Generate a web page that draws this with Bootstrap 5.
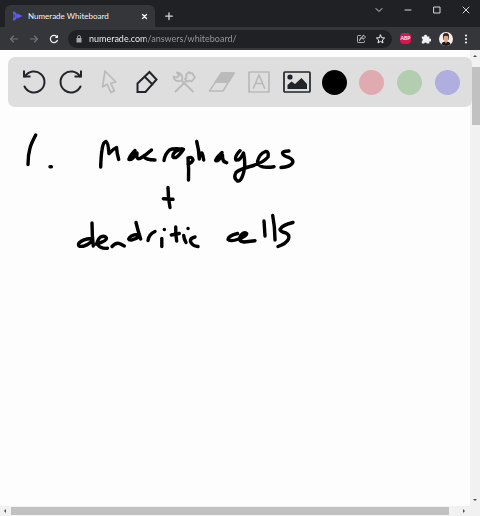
<!DOCTYPE html>
<html lang="en">
<head>
<meta charset="utf-8">
<meta name="viewport" content="width=device-width, initial-scale=1">
<title>Numerade Whiteboard</title>
<link href="https://cdn.jsdelivr.net/npm/bootstrap@5.3.0/dist/css/bootstrap.min.css" rel="stylesheet">
<style>
body{font-family:Lato,"Open Sans",sans-serif;font-size:8px;line-height:12px;background:#fdfdfd;overflow:hidden}
button{border:0;padding:0;background:none;color:inherit;display:flex;align-items:center;justify-content:center;flex-shrink:0}
svg{display:block;flex-shrink:0}
.ln{fill:none;stroke:currentColor;stroke-linecap:round;stroke-linejoin:round}
.tabstrip{background:#202124;height:27px;padding:5px 0 0 5px;color:#d5d7da}
.tab{background:#35363a;border-radius:6px 6px 0 0;width:150px;height:22px;padding:0 6px 0 7px;color:#f1f3f4}
.tabname{margin-left:5px}
.winbtn{width:29px;height:10px}
.addressbar{background:#35363a;height:23px;padding:0 4px;color:#f1f3f4}
.navbtn{width:20px;height:20px}
.urlbox{background:#202124;border-radius:9px;height:18px;margin-left:4px;padding:0 6px 0 8px}
.url{border:0;outline:0;padding:0;min-width:0;height:14px;margin-left:7px;font-size:9px;line-height:14px;color:transparent;background:linear-gradient(90deg,#fff 57px,#9a9da2 57px);-webkit-background-clip:text;background-clip:text}
.abp{width:11px;height:11px;border-radius:4px;background:#e0114e;color:#fff;font-size:5px;line-height:11px;font-weight:700;margin-right:5px}
.extras{margin-left:8px}
.toolpanel{background:#dedede;border-radius:7px;height:50px;margin:7px -2px 0 8px;padding:0 6px 0 7px;color:#212529}
.tool{flex:1 1 0;height:32px}
.tool:disabled{color:#b9bbbb}
.swatch{width:25px;height:25px;border-radius:50%}
.black{background:#000}.pink{background:#e0abb0}.green{background:#b2cdb0}.violet{background:#b0addf}
.ink{color:#000}
.vbar{width:10px;color:#505050}
.hbar{height:10px;background:#f1f1f1;color:#505050}
.board{background:linear-gradient(270deg,#f1f1f1 10px,transparent 10px)}
.arrow{width:10px;height:10px}
.vthumb{width:8px;height:58px;margin-top:7px;margin-left:1px;background:#c1c1c1}
.hthumb{height:8px;background:#c1c1c1;flex:0 1 438px;margin-left:1px}
.endarrow{margin-right:11px}
</style>
<script src="https://cdn.jsdelivr.net/npm/bootstrap@5.3.0/dist/js/bootstrap.bundle.min.js"></script>
</head>
<body class="d-flex flex-column vh-100">
<header>
  <div class="tabstrip d-flex">
    <div class="tab d-flex align-items-center">
      <svg width="11" height="12" viewBox="0 0 11 12"><path d="M1 1l9.500 5L1 11z" fill="#5a57f0"/><path d="M0 4l3 2-3 2M4.500 2l.5 2.500M4.500 10l.5-2.500" fill="none" stroke="#35363a" stroke-width=".8"/></svg>
      <span class="tabname flex-fill text-nowrap">Numerade Whiteboard</span>
      <button type="button" aria-label="Close tab"><svg class="ln" width="9" height="9" viewBox="0 0 9 9" stroke-width="1.400"><path d="M2.500 2.500l4 4M6.500 2.500l-4 4"/></svg></button>
    </div>
    <button type="button" class="ms-2 align-self-center" aria-label="New tab"><svg class="ln" width="12" height="10" viewBox="0 0 12 10" stroke-width="1.300"><path d="M6 2v6.500M2.800 5.200h6.500"/></svg></button>
    <div class="d-flex ms-auto">
      <button type="button" class="winbtn" aria-label="Search tabs"><svg class="ln" width="10" height="8" viewBox="0 0 10 8"><path d="M2 2.500l3 3 3-3"/></svg></button>
      <button type="button" class="winbtn" aria-label="Minimize"><svg class="ln" width="8" height="8" viewBox="0 0 8 8"><path d="M1 4h6"/></svg></button>
      <button type="button" class="winbtn" aria-label="Maximize"><svg class="ln" width="8" height="8" viewBox="0 0 8 8"><path d="M1 1h6v6H1z"/></svg></button>
      <button type="button" class="winbtn" aria-label="Close window"><svg class="ln" width="8" height="8" viewBox="0 0 8 8"><path d="M1 1l6 6M7 1L1 7"/></svg></button>
    </div>
  </div>
  <div class="addressbar d-flex align-items-center">
    <button type="button" class="navbtn" aria-label="Back" disabled><svg class="ln text-secondary" width="10" height="10" viewBox="0 0 10 10" stroke-width="1.100"><path d="M8.500 5H1.500M4.500 2l-3 3 3 3"/></svg></button>
    <button type="button" class="navbtn" aria-label="Forward" disabled><svg class="ln text-secondary" width="10" height="10" viewBox="0 0 10 10" stroke-width="1.100"><path d="M1.500 5h7M5.500 2l3 3-3 3"/></svg></button>
    <button type="button" class="navbtn" aria-label="Reload"><svg class="ln" width="10" height="10" viewBox="0 0 10 10" stroke-width="1.300"><path d="M8.300 6.400A3.600 3.600 0 1 1 8 3"/><path d="M9 .8v3.200H5.800z" fill="currentColor" stroke="none"/></svg></button>
    <div class="urlbox d-flex align-items-center flex-fill">
      <svg width="6" height="8" viewBox="0 0 6 8"><path d="M.5 3h5v4.500h-5z" fill="#a5a8ac"/><path d="M1.500 3V2a1.500 1.500 0 0 1 3 0v1" fill="none" stroke="#a5a8ac" stroke-width=".9"/></svg>
      <input class="url flex-fill" type="text" aria-label="Address" value="numerade.com/answers/whiteboard/">
      <button type="button" aria-label="Share"><svg class="ln" width="11" height="10" viewBox="0 0 11 10" stroke-width=".9" opacity=".75"><path d="M4.500 1.500H2.200Q1.500 1.500 1.500 2.200v5.600q0 .7.700.7h5.600q.7 0 .7-.7V7M3.500 6.500Q4 3.800 7 3.800V5.400L9.700 3 7 1v1.500Q4 2.700 3.500 6.500z"/></svg></button>
      <button type="button" class="ms-2" aria-label="Bookmark"><svg class="ln" width="11" height="10" viewBox="0 0 11 10" stroke-width="1"><path d="M5.500 1l1.200 2.700 2.900.3-2.200 2 .6 2.900-2.500-1.500L3 8.900 3.600 6 1.400 4l2.900-.3z"/></svg></button>
    </div>
    <div class="extras d-flex align-items-center">
      <button type="button" class="abp">ABP</button>
      <button type="button" class="navbtn" aria-label="Extensions"><svg width="10" height="10" viewBox="0 0 10 10" fill="#f1f3f4"><path d="M.8 2.500h2.400a1.400 1.400 0 1 1 2.700 0h2.400v2.300a1.400 1.400 0 1 1 0 2.600v2.200H5.900a1.400 1.400 0 0 0-2.700 0H.8V7.200a1.400 1.400 0 0 0 0-2.700z"/></svg></button>
      <button type="button" class="navbtn" aria-label="Profile"><svg width="14" height="14" viewBox="0 0 14 14"><circle cx="7" cy="7" r="7" fill="#f3f0ec"/><path d="M2.500 12.300Q3 9.500 7 9.500t4.500 2.800A7 7 0 0 1 2.500 12.300z" fill="#1b1717"/><path d="M4 6Q3.300 1 7 1t3 5l-.6 2H4.600z" fill="#35231b"/><path d="M4.700 4.500Q7 3 9.300 4.500V7Q8.700 9 8 9.300L7 12 6 9.300Q5 9 4.700 7z" fill="#dda985"/></svg></button>
      <button type="button" class="navbtn" aria-label="Menu"><svg width="4" height="12" viewBox="0 0 4 12" fill="currentColor"><circle cx="2" cy="2.500" r="1.100"/><circle cx="2" cy="6" r="1.100"/><circle cx="2" cy="9.500" r="1.100"/></svg></button>
    </div>
  </div>
</header>
<div class="board d-flex flex-fill overflow-hidden">
  <main class="flex-fill">
    <div class="toolpanel d-flex align-items-center" role="toolbar" aria-label="Drawing tools">
      <button type="button" class="tool" aria-label="Undo"><svg class="ln" width="28" height="28" viewBox="0 0 28 28" stroke-width="2"><path d="M4.500 18.500A10.500 10.500 0 1 0 5 8.500"/><path d="M4 3.500V8.500H9.500" stroke-linecap="square" stroke-linejoin="miter"/></svg></button>
      <button type="button" class="tool" aria-label="Redo"><svg class="ln" width="28" height="28" viewBox="0 0 28 28" stroke-width="2"><path d="M23.500 18.500A10.500 10.500 0 1 1 23 8.500"/><path d="M24 3.500V8.500H18.500" stroke-linecap="square" stroke-linejoin="miter"/></svg></button>
      <button type="button" class="tool" aria-label="Select" disabled><svg class="ln" width="28" height="28" viewBox="0 0 28 28" stroke-width="1.700"><path d="M10 3L7.500 19l4.700-2.800 3.600 8.300 3.600-1.600-3.600-7.600 5-1.300z"/></svg></button>
      <button type="button" class="tool" aria-label="Pen"><svg class="ln" width="28" height="28" viewBox="0 0 28 28" stroke-width="2"><path d="M4.500 24v-8.500L16.500 4l7 7.500L12.500 24zM11.500 8.500l8 8" stroke-linejoin="miter"/></svg></button>
      <button type="button" class="tool" aria-label="Tools" disabled><svg class="ln" width="28" height="28" viewBox="0 0 28 28" stroke-width="1.800"><path d="M5.500 23.500L16.500 12.500M23 23.500L11.500 12.500M3.500 8.500q.5 3.500 3.500 4.500 2.500.5 4.500-.5 1.500-2 .5-4.500-1.500-3-5-3.500l2 3-2 2zM16 7l3-3 1.500 1.500 1.500-.5 3 4.500-3.500 4-2-1-2 1-2.500-2.500 1.500-1.500z"/></svg></button>
      <button type="button" class="tool" aria-label="Eraser" disabled><svg class="ln" width="30" height="28" viewBox="0 0 30 28" stroke-width="1.500"><path d="M2.500 23L14.500 5h12.500L16 23zM8.500 14h13"/><path d="M14.500 5h12.500L21.500 14h-13z" fill="currentColor"/></svg></button>
      <button type="button" class="tool" aria-label="Text" disabled><svg class="ln" width="28" height="28" viewBox="0 0 28 28" stroke-width="1.700"><path d="M4 4h20v20H4z"/><path d="M8.500 20L14 7l5.500 13M10.500 15.500h7"/></svg></button>
      <button type="button" class="tool" aria-label="Image"><svg class="ln" width="28" height="28" viewBox="0 0 28 28" stroke-width="1.700"><rect x="1" y="4" width="26" height="20" rx="1"/><circle cx="7" cy="9" r="2.600" fill="currentColor" stroke="none"/><path d="M4.500 21v-4l4-3.500 3.500 2.500L18.500 10l5.500 6v5z" fill="currentColor" stroke="none"/></svg></button>
      <button type="button" class="tool" aria-label="Black"><span class="swatch black"></span></button>
      <button type="button" class="tool" aria-label="Pink"><span class="swatch pink"></span></button>
      <button type="button" class="tool" aria-label="Green"><span class="swatch green"></span></button>
      <button type="button" class="tool" aria-label="Violet"><span class="swatch violet"></span></button>
    </div>
    <!-- Pen strokes on the board -->
    <svg class="ln ink" width="460" height="390" viewBox="0 107 460 390" stroke-width="3.400" role="img" aria-label="1. Macrophages + dendritic cells">
      <path d="M35.700 135Q31 144 30 148Q28 155 28 164.500M50 166.700h1.400"/>
      <path d="M100.700 167Q101 156 102 150Q103 142 106 141.500Q108 142 109 153.500Q113 149 116.500 147.500Q117 154 118.700 159.500"/>
      <path d="M135 150.500Q128 158 129 159.500Q132 160.500 137 153Q136 160 140 158.500Q146 155 151.500 150L143.500 156.500Q146 160 155 160"/>
      <path d="M164 160.500Q165 154 169.500 150Q173 148 183.500 149.300Q179 156 176 157.500Q172 158 173 155Q175 150 182 149"/>
      <path d="M188 158Q189 170 188.500 180M188 158Q192 156 193 160Q192 163 188 164M196.700 141.500Q199 150 199.300 159Q200 152 202 153Q203 155 203.700 160"/>
      <path d="M222 152.500Q215 159 215.700 160.500Q218 162 222.500 155Q222 162 226.700 162.700"/>
      <path d="M240 150.700Q234 157 236 160Q240 161 243.500 153Q246 165 243.500 173Q241 182 237.500 181Q233 178 236 172.500Q239 169.500 250 166.500Q263 163 268 157Q269 151 265.500 151.500Q259 154 257.500 161.500Q258 169 274 166.700"/>
      <path d="M289 151Q283 151 282.500 153Q283 156 289 157.500Q294 160 292.500 163Q290 167 281 167.500"/>
      <path d="M168 187.500Q168 198 170 207.500M163.300 198.700L173 199.300"/>
      <path d="M91 238.500Q83 239 79 243Q77 247 83 246.300Q90 244 92.500 240M92 223Q92 235 93.300 246"/>
      <path d="M96 244Q107 241 106.500 238Q105 235 100.500 237Q96 241 98 245Q101 249 107.500 248.300"/>
      <path d="M112 246.500Q116 242 120 243.800L124.300 246M136 222.500Q138 231 140.700 239M138 234.500Q130 235 128.700 239Q130 242 140 236.500"/>
      <path d="M148 240.500Q149 234 155 231.500M161.800 238.500v8M164.300 229.500h.1M175.700 227Q175.500 235 176.700 241M171.300 235L179.300 233.500M183.700 235.500Q184 239 186 242.500M188 228.500h.1"/>
      <path d="M195 237Q190 238 190.500 241.500Q192 246 198 246.500"/>
      <path d="M237.500 233.500Q228 236 228 239.500Q231 242 238.500 239Q247 236 246.700 233.500Q244 231.500 241 235Q237 241 244 242L255 240.700"/>
      <path d="M264 221L265 236M272.700 215.500Q275 227 275 240M293 222.500Q282 225 280 229.500Q281 232 286 233Q290 235 288.500 239Q286 244 278 246.500"/>
    </svg>
  </main>
  <div class="vbar d-flex flex-column align-items-center">
    <svg class="arrow" viewBox="0 0 10 10" fill="currentColor"><path d="M3 7l2-2 2 2z"/></svg>
    <div class="vthumb"></div>
    <svg class="arrow mt-auto" viewBox="0 0 10 10" fill="currentColor"><path d="M3 3l2 2 2-2z"/></svg>
  </div>
</div>
<div class="hbar d-flex align-items-center">
  <svg class="arrow" viewBox="0 0 10 10" fill="currentColor"><path d="M6 3L4 5l2 2z"/></svg>
  <div class="hthumb"></div>
  <svg class="arrow ms-auto endarrow" viewBox="0 0 10 10" fill="currentColor"><path d="M4 3l2 2-2 2z"/></svg>
</div>
</body>
</html>
